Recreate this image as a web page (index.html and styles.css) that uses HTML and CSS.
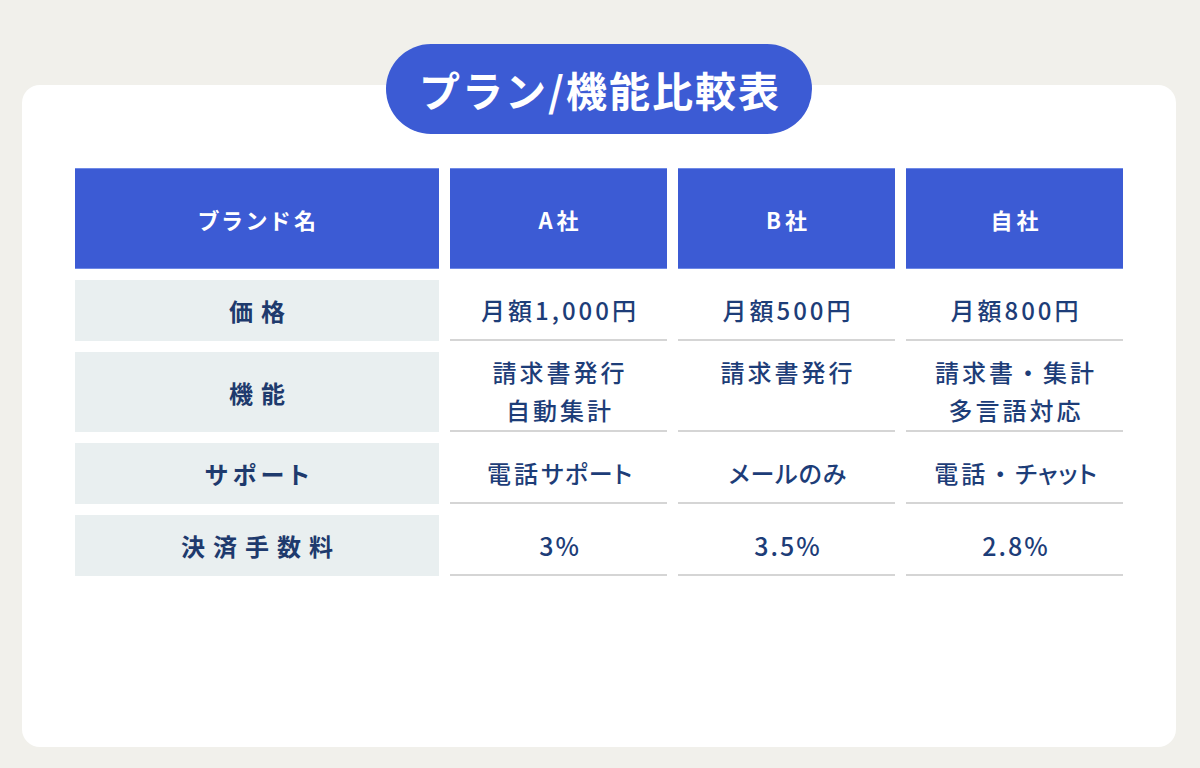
FILE: index.html
```html
<!DOCTYPE html>
<html lang="ja">
<head>
<meta charset="utf-8">
<title>プラン/機能比較表</title>
<link rel="stylesheet" href="styles.css">
</head>
<body>
<div class="page">
  <section class="card">
    <h1 class="badge">プラン/機能比較表</h1>
    <div class="table">
      <div class="th"><span class="pk">ブランド名</span></div>
      <div class="th">A社</div>
      <div class="th">B社</div>
      <div class="th">自社</div>

      <div class="label">価格</div>
      <div class="cell"><p class="txt">月額1,000円</p></div>
      <div class="cell"><p class="txt">月額500円</p></div>
      <div class="cell"><p class="txt">月額800円</p></div>

      <div class="label">機能</div>
      <div class="cell top"><p class="txt">請求書発行<br>自動集計</p></div>
      <div class="cell top"><p class="txt">請求書発行</p></div>
      <div class="cell top"><p class="txt">請求書・集計<br>多言語対応</p></div>

      <div class="label label-kana"><span class="pk">サポート</span></div>
      <div class="cell"><p class="txt">電話<span class="pk">サポート</span></p></div>
      <div class="cell"><p class="txt"><span class="pk">メールのみ</span></p></div>
      <div class="cell"><p class="txt">電話・<span class="pk">チャット</span></p></div>

      <div class="label">決済手数料</div>
      <div class="cell"><p class="txt num">3%</p></div>
      <div class="cell"><p class="txt num">3.5%</p></div>
      <div class="cell"><p class="txt num">2.8%</p></div>
    </div>
  </section>
</div>
</body>
</html>
```

FILE: styles.css
```css
html, body {
  margin: 0;
  padding: 0;
}

body {
  background: #f1f0eb;
  font-family: "Noto Sans CJK JP", "Noto Sans", sans-serif;
  width: 1200px;
  height: 768px;
  overflow: hidden;
}

.page {
  padding: 85px 24px 0 22px;
}

.card {
  position: relative;
  box-sizing: border-box;
  width: 1154px;
  height: 662px;
  background: #ffffff;
  border-radius: 18px;
  padding: 83px 53px 0 53px;
}

.badge {
  position: absolute;
  top: -41px;
  left: 364px;
  width: 426px;
  height: 90px;
  margin: 0;
  box-sizing: border-box;
  border-radius: 45px;
  background: #3c5bd4;
  color: #ffffff;
  font-size: 41px;
  font-weight: 700;
  letter-spacing: 2px;
  display: flex;
  align-items: center;
  justify-content: center;
  padding-left: 2px;
}

.table {
  display: grid;
  grid-template-columns: 364px 217px 217px 217px;
  grid-template-rows: 101px 61px 80px 61px 61px;
  column-gap: 11px;
  row-gap: 11px;
}

.th {
  box-sizing: border-box;
  background: #3c5bd4;
  border-top: 1px solid #6e89e6;
  border-bottom: 1px solid #6e89e6;
  color: #ffffff;
  font-size: 22px;
  font-weight: 700;
  letter-spacing: 4px;
  padding-left: 4px;
  display: flex;
  align-items: center;
  justify-content: center;
}

.pk {
  font-feature-settings: "palt" 1;
}

.label {
  background: #e9eff0;
  color: #1e3a6d;
  font-size: 24px;
  font-weight: 700;
  letter-spacing: 8px;
  padding-left: 8px;
  display: flex;
  align-items: center;
  justify-content: center;
}

.label-kana {
  letter-spacing: 5px;
  padding-left: 5px;
}

.cell {
  box-sizing: border-box;
  border-bottom: 2px solid #d5d5d5;
  color: #1d3d78;
  font-size: 24px;
  font-weight: 500;
  letter-spacing: 3px;
  display: flex;
  align-items: center;
  justify-content: center;
}

.cell .pk {
  letter-spacing: 1px;
}

.cell.top {
  align-items: flex-start;
  padding-top: 1px;
}

.txt {
  margin: 0;
  padding-left: 3px;
  line-height: 38px;
  text-align: center;
}

.txt.num {
  letter-spacing: 2px;
  font-size: 25px;
}
```
